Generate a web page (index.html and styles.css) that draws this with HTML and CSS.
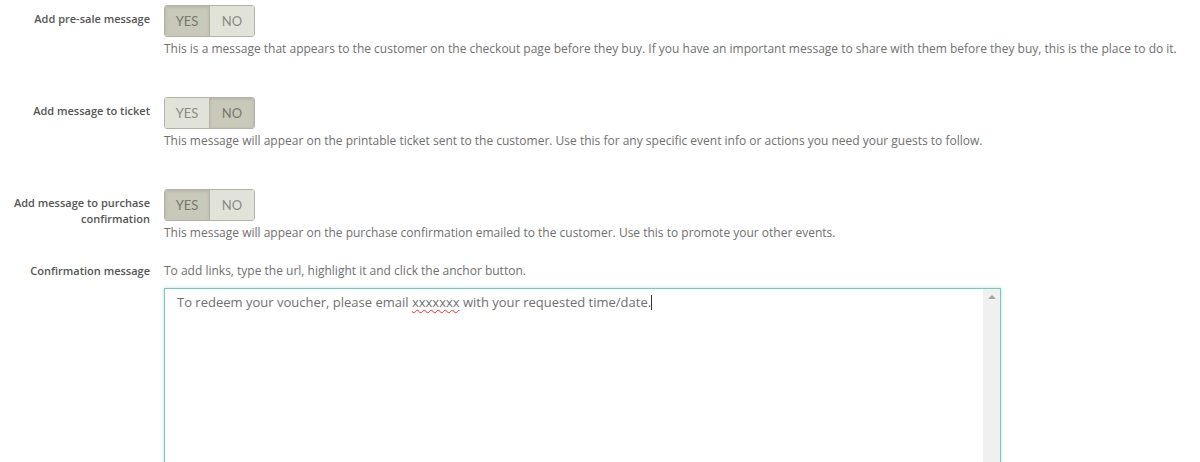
FILE: index.html
```html
<!DOCTYPE html>
<html>
<head>
    <meta charset="UTF-8">
    <title>Event messages</title>
    <link rel="stylesheet" href="styles.css">
</head>
<body>
    <div class="settings">
        <div class="row">
            <div class="label">Add pre-sale message</div>
            <div class="field">
                <div class="toggle">
                    <span class="opt on">YES</span>
                    <span class="opt">NO</span>
                </div>
                <p class="help">This is a message that appears to the customer on the checkout page before they buy. If you have an important message to share with them before they buy, this is the place to do it.</p>
            </div>
        </div>

        <div class="row">
            <div class="label">Add message to ticket</div>
            <div class="field">
                <div class="toggle">
                    <span class="opt">YES</span>
                    <span class="opt on">NO</span>
                </div>
                <p class="help">This message will appear on the printable ticket sent to the customer. Use this for any specific event info or actions you need your guests to follow.</p>
            </div>
        </div>

        <div class="row row-last">
            <div class="label">Add message to purchase confirmation</div>
            <div class="field">
                <div class="toggle">
                    <span class="opt on">YES</span>
                    <span class="opt">NO</span>
                </div>
                <p class="help">This message will appear on the purchase confirmation emailed to the customer. Use this to promote your other events.</p>
            </div>
        </div>

        <div class="row row-text">
            <div class="label">Confirmation message</div>
            <div class="field">
                <p class="help help-top">To add links, type the url, highlight it and click the anchor button.</p>
                <div class="editor">
                    <div class="editor-body">To redeem your voucher, please email <span class="typo">xxxxxxx</span> with your requested time/date.<span class="caret"></span></div>
                    <div class="scroll"><span class="arrow"></span></div>
                </div>
            </div>
        </div>
    </div>
</body>
</html>
```

FILE: styles.css
```css
body {
    margin: 0;
    font-family: "Open Sans", sans-serif;
    background: #fff;
    color: #666;
}
.settings {
    padding-top: 5px;
}
.row {
    display: flex;
    height: 92px;
}
.row-last {
    height: 74px;
}
.row-text {
    height: auto;
}
.label {
    width: 150px;
    box-sizing: border-box;
    padding: 6px 0 0 8px;
    text-align: right;
    font-family: "Open Sans", sans-serif;
    font-size: 11px;
    font-weight: 600;
    line-height: 16px;
    color: #555;
}
.field {
    margin-left: 14px;
}
.toggle {
    display: inline-flex;
    border: 1px solid #b3b4a6;
    border-radius: 3px;
    overflow: hidden;
    height: 30px;
}
.opt {
    width: 44px;
    line-height: 30px;
    text-align: center;
    font-family: Lato, sans-serif;
    font-size: 13px;
    color: #8a8b82;
    background: #e1e2d8;
}
.opt + .opt {
    border-left: 1px solid #b3b4a6;
}
.opt.on {
    background: #c8c9b9;
    color: #77786e;
    box-shadow: inset 0 1px 3px rgba(0, 0, 0, 0.12);
}
.help {
    margin: 4px 0 0;
    font-size: 12px;
    line-height: 16px;
    color: #707070;
    white-space: nowrap;
}
.row-text .label {
    padding-top: 0;
}
.help-top {
    margin: 0;
}
.editor {
    display: flex;
    margin-top: 9px;
    width: 835px;
    height: 200px;
    border: 1px solid #7fc4c2;
    box-shadow: 0 0 4px rgba(110, 190, 190, 0.45);
}
.editor-body {
    flex: 1;
    padding: 5px 12px;
    font-size: 13px;
    line-height: 16px;
    color: #707070;
}
.typo {
    text-decoration: underline wavy #e03030;
    text-decoration-thickness: 1px;
    text-underline-offset: 2px;
}
.caret {
    display: inline-block;
    width: 1px;
    height: 15px;
    background: #333;
    vertical-align: -3px;
}
.scroll {
    width: 17px;
    background: #f0f0f0;
    display: flex;
    justify-content: center;
    padding-top: 6px;
}
.arrow {
    width: 0;
    height: 0;
    border-left: 4px solid transparent;
    border-right: 4px solid transparent;
    border-bottom: 4px solid #a3a3a3;
}
```
